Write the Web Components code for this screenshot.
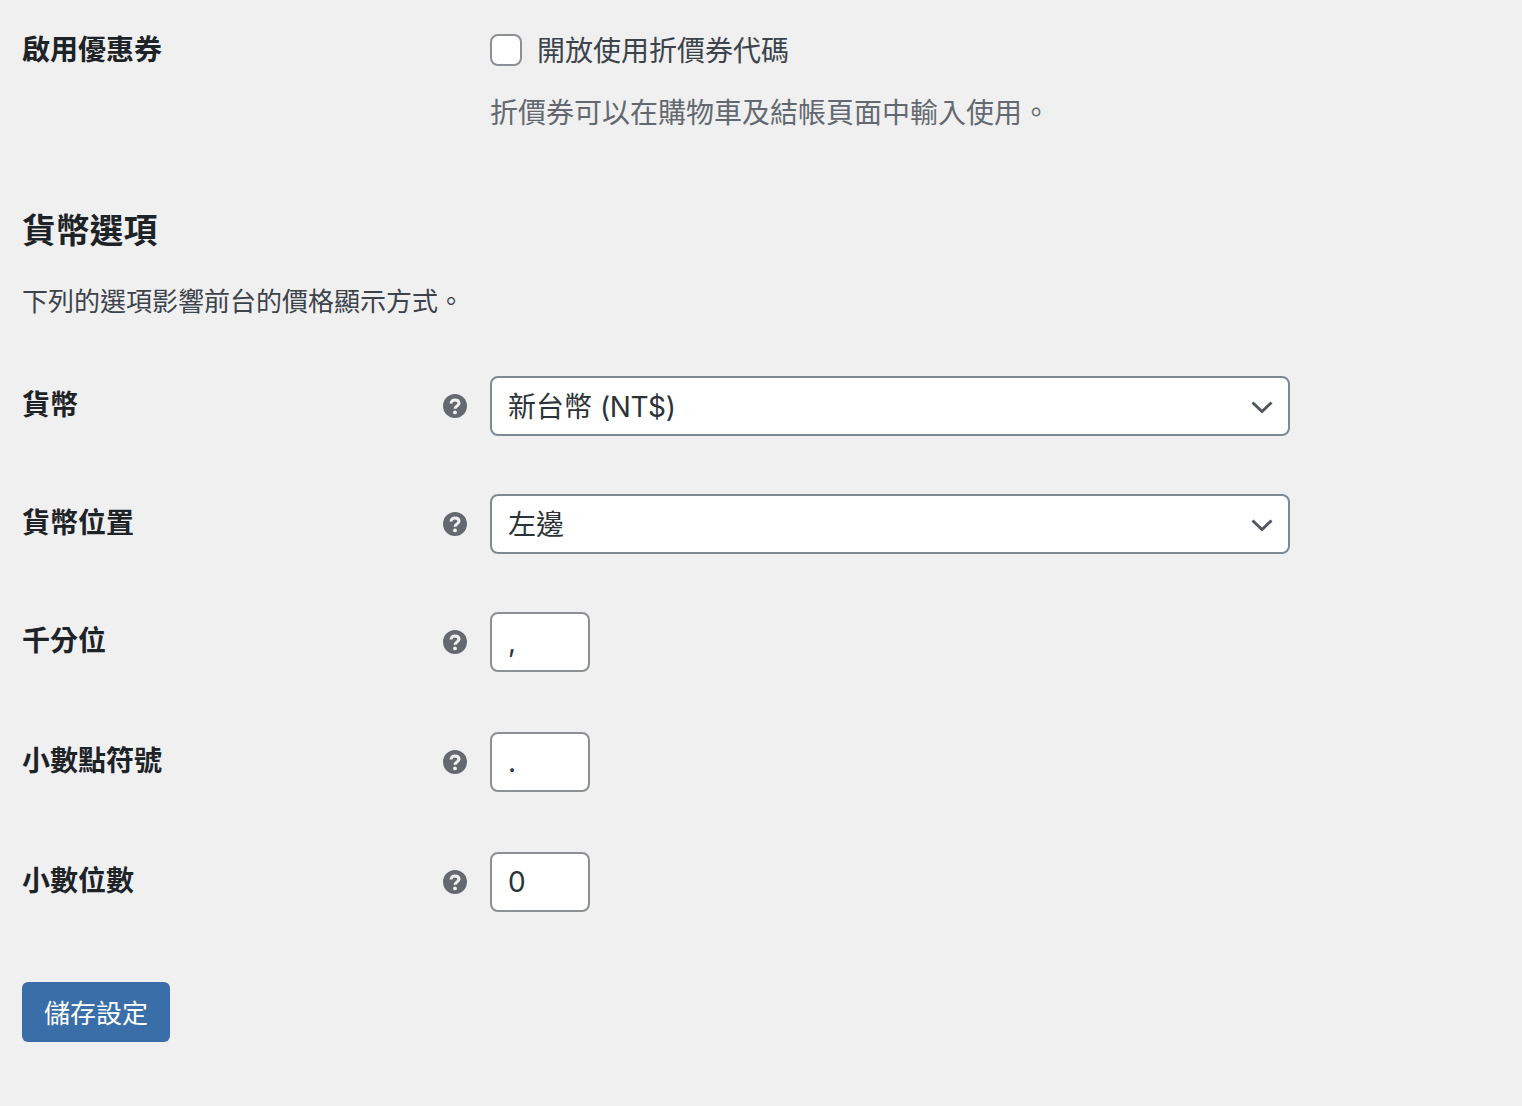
<!DOCTYPE html>
<html lang="zh-Hant">
<head>
<meta charset="utf-8">
<title>設定</title>
<style>
    html, body {
        margin: 0;
        background: #f0f0f1;
    }
    body {
        color: #1d2327;
        font-family: "Inter", "Noto Sans CJK TC", sans-serif;
    }
</style>
</head>
<body>
<settings-page>
    <field-row label="啟用優惠券" no-help>
        <check-field desc="折價券可以在購物車及結帳頁面中輸入使用。">開放使用折價券代碼</check-field>
    </field-row>

    <section-head slot="currency" title="貨幣選項">下列的選項影響前台的價格顯示方式。</section-head>

    <field-row slot="currency" label="貨幣" gap="58"><select-box>新台幣 <span style="letter-spacing: -0.4px">(NT$)</span></select-box></field-row>
    <field-row slot="currency" label="貨幣位置" gap="58"><select-box>左邊</select-box></field-row>
    <field-row slot="currency" label="千分位" gap="60"><text-box>,</text-box></field-row>
    <field-row slot="currency" label="小數點符號" gap="60"><text-box>.</text-box></field-row>
    <field-row slot="currency" label="小數位數" gap="70"><text-box>0</text-box></field-row>

    <save-button slot="currency">儲存設定</save-button>
</settings-page>

<script>
class SettingsPage extends HTMLElement {
    connectedCallback() {
        this.attachShadow({ mode: 'open' });
        this.shadowRoot.innerHTML = `
            <style>
                :host {
                    display: block;
                    padding: 21px 22px 63px;
                }
            </style>
            <slot></slot>
            <slot name="currency"></slot>
        `;
    }
}

class FieldRow extends HTMLElement {
    connectedCallback() {
        const gap = this.getAttribute('gap') || 0;
        const help = this.hasAttribute('no-help') ? '' : `
            <svg class="help" viewBox="0 0 24 24" width="24" height="24">
                <circle cx="12" cy="12" r="12" fill="#646970"/>
                <path d="M8 9.6c0-2.4 1.8-3.6 4-3.6s4 1.2 4 3.3c0 2.7-4 2.6-4 5.4" fill="none" stroke="#f0f0f1" stroke-width="3"/>
                <circle cx="12" cy="18.4" r="1.9" fill="#f0f0f1"/>
            </svg>`;
        this.attachShadow({ mode: 'open' });
        this.shadowRoot.innerHTML = `
            <style>
                :host {
                    display: block;
                    padding-bottom: ${gap}px;
                }
                .row {
                    display: grid;
                    grid-template-columns: 468px 1fr;
                }
                .label {
                    display: flex;
                    justify-content: space-between;
                    align-items: flex-start;
                    padding-right: 23px;
                    font-size: 28px;
                    font-weight: 700;
                    line-height: 58px;
                }
                .help {
                    margin-top: 18px;
                }
            </style>
            <div class="row">
                <div class="label"><span>${this.getAttribute('label')}</span>${help}</div>
                <div><slot></slot></div>
            </div>
        `;
    }
}

class CheckField extends HTMLElement {
    connectedCallback() {
        this.attachShadow({ mode: 'open' });
        this.shadowRoot.innerHTML = `
            <style>
                :host {
                    display: block;
                    padding-top: 12px;
                    font-size: 28px;
                }
                label {
                    display: flex;
                    align-items: center;
                    gap: 15px;
                    height: 34px;
                    color: #3c434a;
                    line-height: 34px;
                }
                label span {
                    margin-top: 2px;
                }
                input {
                    appearance: none;
                    box-sizing: border-box;
                    width: 32px;
                    height: 32px;
                    margin: 0;
                    background: #fff;
                    border: 2px solid #8c8f94;
                    border-radius: 8px;
                }
                p {
                    margin: 26px 0 0;
                    color: #646970;
                    line-height: 40px;
                }
            </style>
            <label><input type="checkbox"><span><slot></slot></span></label>
            <p>${this.getAttribute('desc')}</p>
        `;
    }
}

class SectionHead extends HTMLElement {
    connectedCallback() {
        this.attachShadow({ mode: 'open' });
        this.shadowRoot.innerHTML = `
            <style>
                :host {
                    display: block;
                    padding: 76px 0 54px;
                }
                h2 {
                    margin: 0;
                    font-size: 33.8px;
                    font-weight: 700;
                    line-height: 44px;
                }
                p {
                    margin: 29px 0 0;
                    color: #3c434a;
                    font-size: 26px;
                    line-height: 40px;
                }
            </style>
            <h2>${this.getAttribute('title')}</h2>
            <p><slot></slot></p>
        `;
    }
}

class SelectBox extends HTMLElement {
    connectedCallback() {
        this.attachShadow({ mode: 'open' });
        this.shadowRoot.innerHTML = `
            <style>
                :host {
                    display: flex;
                    align-items: center;
                    justify-content: space-between;
                    box-sizing: border-box;
                    width: 800px;
                    height: 60px;
                    padding: 0 15px 0 16px;
                    color: #2c3338;
                    background: #fff;
                    border: 2px solid #7e8993;
                    border-radius: 8px;
                    font-size: 28px;
                }
                span {
                    margin-bottom: 2px;
                }
                svg {
                    display: block;
                    margin-top: 2px;
                }
            </style>
            <span><slot></slot></span>
            <svg viewBox="0 0 22 14" width="22" height="14">
                <path d="M1.5 2.5 11 11.5l9.5-9" fill="none" stroke="#50575e" stroke-width="3"/>
            </svg>
        `;
    }
}

class TextBox extends HTMLElement {
    connectedCallback() {
        this.attachShadow({ mode: 'open' });
        this.shadowRoot.innerHTML = `
            <style>
                :host {
                    display: flex;
                    align-items: center;
                    box-sizing: border-box;
                    width: 100px;
                    height: 60px;
                    padding: 0 16px;
                    color: #2c3338;
                    background: #fff;
                    border: 2px solid #8c8f94;
                    border-radius: 8px;
                    font-size: 28px;
                }
            </style>
            <slot></slot>
        `;
    }
}

class SaveButton extends HTMLElement {
    connectedCallback() {
        this.attachShadow({ mode: 'open' });
        this.shadowRoot.innerHTML = `
            <style>
                :host {
                    display: block;
                }
                button {
                    display: block;
                    width: 148px;
                    height: 60px;
                    padding: 0 0 2px;
                    color: #fff;
                    background: #3a6ea9;
                    border: 0;
                    border-radius: 6px;
                    font: inherit;
                    font-size: 26px;
                }
            </style>
            <button type="button"><slot></slot></button>
        `;
    }
}

customElements.define('settings-page', SettingsPage);
customElements.define('field-row', FieldRow);
customElements.define('check-field', CheckField);
customElements.define('section-head', SectionHead);
customElements.define('select-box', SelectBox);
customElements.define('text-box', TextBox);
customElements.define('save-button', SaveButton);
</script>
</body>
</html>
